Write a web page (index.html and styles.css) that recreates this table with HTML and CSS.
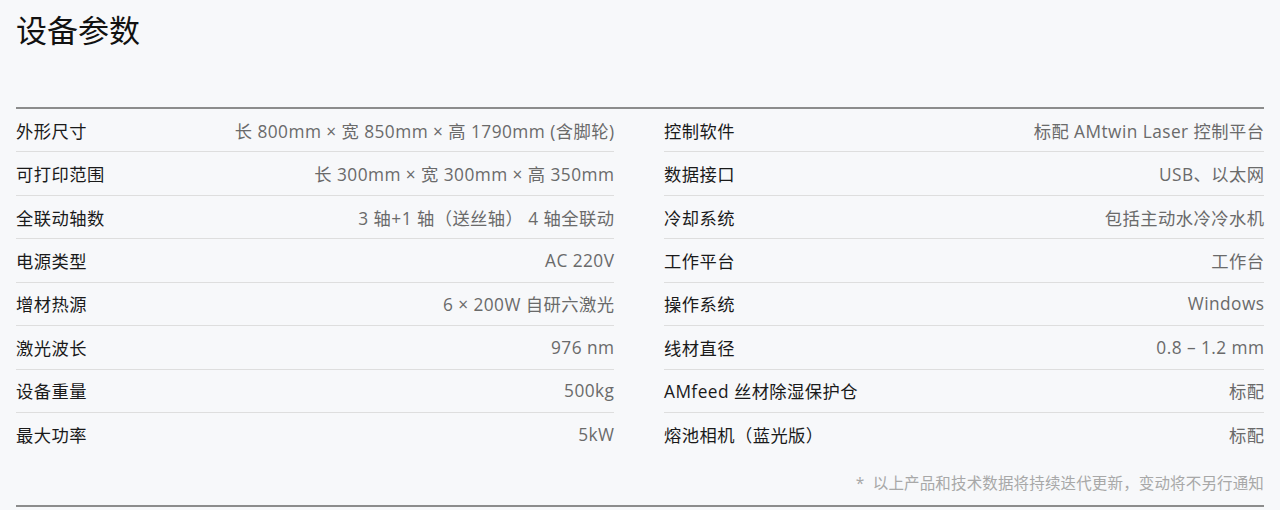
FILE: index.html
```html
<!DOCTYPE html>
<html lang="zh-CN">
<head>
<meta charset="utf-8">
<title>设备参数</title>
<link rel="stylesheet" href="styles.css">
</head>
<body>
<main class="page">
  <h1 class="title">设备参数</h1>
  <section class="specs">
    <div class="col">
      <div class="row"><span class="label">外形尺寸</span><span class="value">长 800mm × 宽 850mm × 高 1790mm (含脚轮)</span></div>
      <div class="row"><span class="label">可打印范围</span><span class="value">长 300mm × 宽 300mm × 高 350mm</span></div>
      <div class="row"><span class="label">全联动轴数</span><span class="value">3 轴+1 轴（送丝轴） 4 轴全联动</span></div>
      <div class="row"><span class="label">电源类型</span><span class="value">AC 220V</span></div>
      <div class="row"><span class="label">增材热源</span><span class="value">6 × 200W 自研六激光</span></div>
      <div class="row"><span class="label">激光波长</span><span class="value">976 nm</span></div>
      <div class="row"><span class="label">设备重量</span><span class="value">500kg</span></div>
      <div class="row"><span class="label">最大功率</span><span class="value">5kW</span></div>
    </div>
    <div class="col">
      <div class="row"><span class="label">控制软件</span><span class="value">标配 AMtwin Laser 控制平台</span></div>
      <div class="row"><span class="label">数据接口</span><span class="value">USB、以太网</span></div>
      <div class="row"><span class="label">冷却系统</span><span class="value">包括主动水冷冷水机</span></div>
      <div class="row"><span class="label">工作平台</span><span class="value">工作台</span></div>
      <div class="row"><span class="label">操作系统</span><span class="value">Windows</span></div>
      <div class="row"><span class="label">线材直径</span><span class="value">0.8 – 1.2 mm</span></div>
      <div class="row"><span class="label">AMfeed 丝材除湿保护仓</span><span class="value">标配</span></div>
      <div class="row"><span class="label">熔池相机（蓝光版）</span><span class="value">标配</span></div>
    </div>
  </section>
  <p class="note">*&nbsp; 以上产品和技术数据将持续迭代更新，变动将不另行通知</p>
</main>
</body>
</html>
```
FILE: styles.css
```css
html, body {
  margin: 0;
  padding: 0;
  background: #f7f8fa;
}
body {
  font-family: "Open Sans", "Noto Sans CJK SC", sans-serif;
  color: #1f1f1f;
}
.page {
  padding: 0 16px;
  height: 510px;
  box-sizing: border-box;
}
.title {
  margin: 0;
  padding-top: 9px;
  font-family: "Noto Sans CJK SC", sans-serif;
  font-size: 31px;
  line-height: 40px;
  font-weight: 400;
  color: #111;
  height: 98px;
}
.specs {
  display: grid;
  grid-template-columns: 598px 600px;
  column-gap: 50px;
  border-top: 2px solid #8c8c8c;
}
.row {
  display: flex;
  justify-content: space-between;
  align-items: center;
  height: 42.43px;
  border-bottom: 1px solid #dedede;
  font-size: 17.3px;
  letter-spacing: 0.45px;
}
.row:last-child {
  border-bottom: none;
}
.label {
  color: #1a1a1a;
}
.value {
  color: #6a6a6a;
  margin-right: -0.45px;
}
.note {
  margin: 16px 0 0;
  padding-bottom: 10px;
  text-align: right;
  font-size: 15.5px;
  line-height: 24px;
  letter-spacing: 0.15px;
  color: #a8a8a8;
  border-bottom: 2px solid #8c8c8c;
}
```
